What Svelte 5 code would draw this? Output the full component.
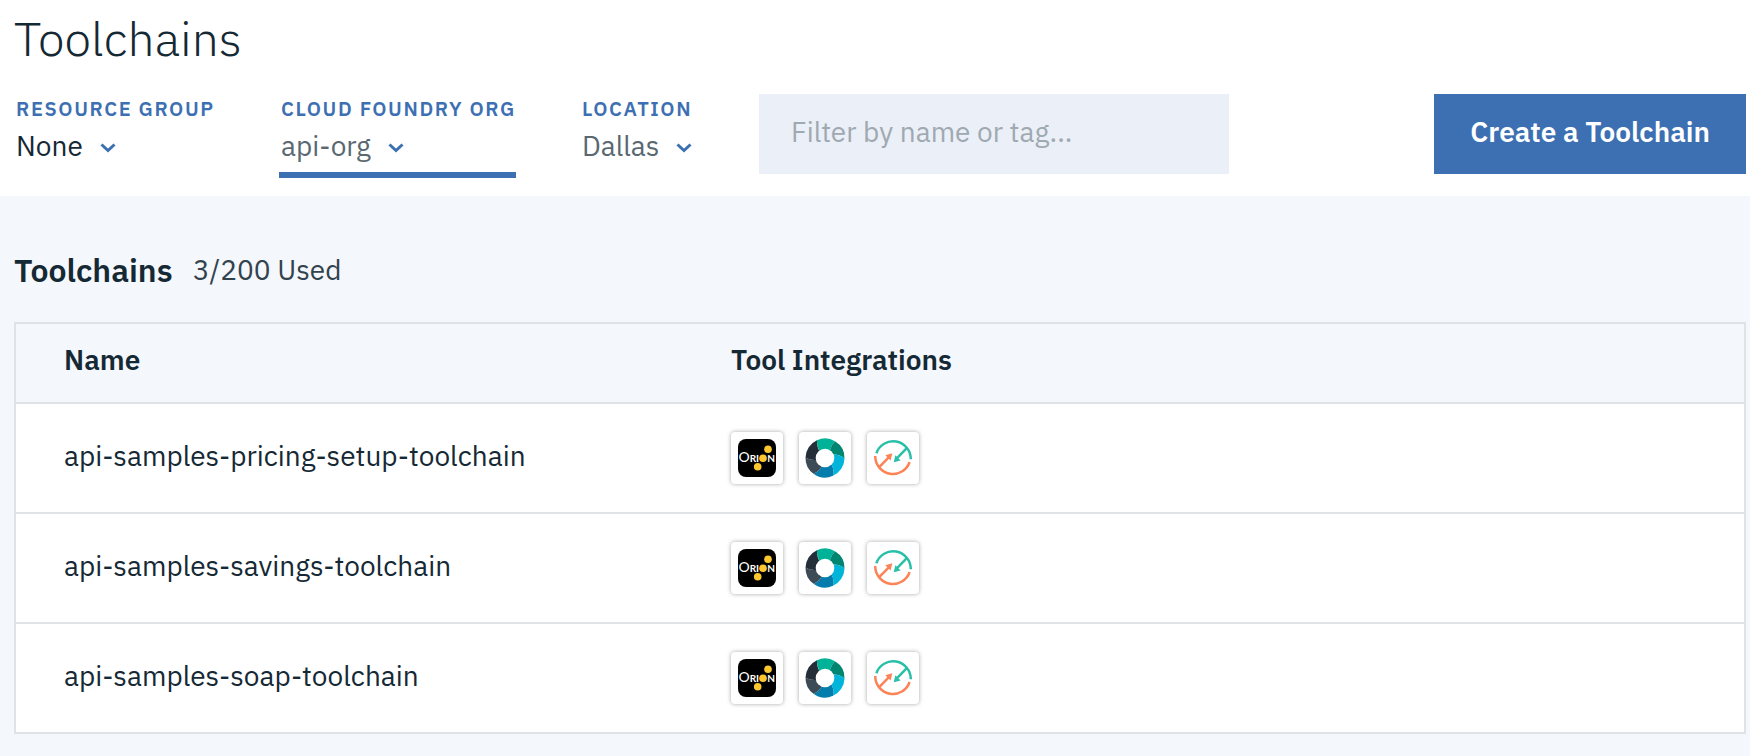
<script>
  const filters = [
    { id: 'group', label: 'Resource Group', value: 'None' },
    { id: 'org', label: 'Cloud Foundry Org', value: 'api-org' },
    { id: 'location', label: 'Location', value: 'Dallas' }
  ];

  const toolchains = [
    'api-samples-pricing-setup-toolchain',
    'api-samples-savings-toolchain',
    'api-samples-soap-toolchain'
  ];

  let query = $state('');
</script>

{#snippet orion()}
  <svg viewBox="0 0 38 38" role="img" aria-label="Orion">
    <rect width="38" height="38" rx="8" fill="#000" />
    <text class="orion-big" x="0.5" y="22.500">O</text>
    <text class="orion-small" x="11.700" y="22.500">RI</text>
    <text class="orion-small" x="29.300" y="22.500">N</text>
    <circle cx="30" cy="10.300" r="3.800" fill="#fdc82f" />
    <circle cx="25" cy="19.300" r="3.800" fill="#fdc82f" />
    <circle cx="19.700" cy="27.800" r="3.800" fill="#fdc82f" />
  </svg>
{/snippet}

{#snippet pipeline()}
  <svg class="ring" viewBox="0 0 40 40" role="img" aria-label="Delivery Pipeline">
    <path d="M12 2.200A19.500 19.500 0 0 1 30 3.200Q26 7 25 12L20 20L14.500 13Q11.500 8 12 2.200Z" fill="#00b398" />
    <path d="M30 3.200A19.500 19.500 0 0 1 39.500 20.500Q35 16.500 29 16.500L20 20L25 12Q26 7 30 3.200Z" fill="#008571" />
    <path d="M39.500 20.500A19.500 19.500 0 0 1 28 37.800Q29.500 32 26.500 26.500L20 20L29 16.500Q35 16.500 39.500 20.500Z" fill="#00b4da" />
    <path d="M28 37.800A19.500 19.500 0 0 1 8.500 35.800Q14 33.500 17 28L20 20L26.500 26.500Q29.500 32 28 37.800Z" fill="#047cac" />
    <path d="M8.500 35.800A19.500 19.500 0 0 1 .5 19.500Q5 22.500 11.500 22L20 20L17 28Q14 33.500 8.500 35.800Z" fill="#3c4b55" />
    <path d="M.5 19.500A19.500 19.500 0 0 1 12 2.200Q11.500 8 14.500 13L20 20L11.500 22Q5 22.500 .5 19.500Z" fill="#232e38" />
    <circle cx="20" cy="20" r="9.300" fill="#fff" />
  </svg>
{/snippet}

{#snippet insights()}
  <svg viewBox="0 0 40 40" role="img" aria-label="DevOps Insights" fill="none" stroke-width="2.600">
    <g stroke="#29bfa8">
      <path d="M2.500 15A18.600 18.600 0 0 1 38.700 21.400" />
      <path d="M34.500 9.500L24 20.500" />
    </g>
    <path d="M20.800 24.500L22.500 17L28 22.500Z" fill="#29bfa8" />
    <g stroke="#fc8356">
      <path d="M1.300 18A18.600 18.600 0 0 0 37.500 24.200" />
      <path d="M5.500 29.500L16 18.800" />
    </g>
    <path d="M19.200 15L17.500 22.500L12 17Z" fill="#fc8356" />
  </svg>
{/snippet}

<header>
  <h1>Toolchains</h1>
  <div class="toolbar">
    {#each filters as filter}
      <div class="filter {filter.id}">
        <label for={filter.id}>{filter.label}</label>
        <div class="picker">
          <select id={filter.id}>
            <option>{filter.value}</option>
          </select>
          <svg viewBox="0 0 16 10" aria-hidden="true"><path d="M1.500 1.500L8 7.500L14.500 1.500" /></svg>
        </div>
      </div>
    {/each}
    <input type="text" aria-label="Filter toolchains" placeholder="Filter by name or tag..." bind:value={query} />
    <button type="button">Create a Toolchain</button>
  </div>
</header>

<main>
  <div class="summary">
    <h2>Toolchains</h2>
    <span>3/200 Used</span>
  </div>
  <table>
    <thead>
      <tr><th>Name</th><th>Tool Integrations</th></tr>
    </thead>
    <tbody>
      {#each toolchains.filter((name) => name.includes(query)) as name}
        <tr>
          <td class="name">{name}</td>
          <td>
            <div class="tools">
              <span class="tile">{@render orion()}</span>
              <span class="tile">{@render pipeline()}</span>
              <span class="tile">{@render insights()}</span>
            </div>
          </td>
        </tr>
      {/each}
    </tbody>
  </table>
</main>

<style>
  :global(body) {
    background: #f4f7fc;
    color: #152935;
    font-family: "IBM Plex Sans", Roboto, sans-serif;
    font-size: 28px;
    line-height: 36px;
  }
  header {
    background: #fff;
    padding: 6px 4px 22px 14px;
  }
  h1 {
    margin: 0 0 24px;
    font-size: 48px;
    line-height: 64px;
    font-weight: 300;
  }
  .toolbar {
    display: flex;
    align-items: flex-start;
  }
  .filter {
    box-sizing: border-box;
    height: 84px;
    margin: 0 64px -4px 0;
    padding: 1px 0 0 2px;
    border-bottom: 6px solid transparent;
    white-space: nowrap;
  }
  .group { min-width: 201px; }
  .org {
    min-width: 237px;
    border-color: #3d70b2;
  }
  .location { min-width: 115px; }
  label {
    display: block;
    color: #3d70b2;
    font-size: 20px;
    line-height: 28px;
    font-weight: 600;
    letter-spacing: 0.08em;
    text-transform: uppercase;
  }
  .picker {
    display: inline-grid;
    align-items: center;
    margin-top: 5px;
  }
  .picker > * { grid-area: 1 / 1; }
  .picker svg {
    justify-self: end;
    width: 16px;
    height: 10px;
    margin-top: 4px;
    fill: none;
    stroke: #3d70b2;
    stroke-width: 3;
    pointer-events: none;
  }
  select {
    appearance: none;
    field-sizing: content;
    margin: 0;
    padding: 0 33px 0 0;
    border: 0;
    background: none;
    color: #5a6872;
    font: inherit;
  }
  .group select { color: #152935; }
  input {
    box-sizing: border-box;
    flex: 0 1 470px;
    min-width: 0;
    height: 80px;
    padding: 0 32px 6px;
    border: 0;
    background: #ebeff8;
    color: #152935;
    font: inherit;
  }
  input::placeholder {
    color: #9fa9b0;
    opacity: 1;
  }
  button {
    height: 80px;
    margin-left: auto;
    padding: 0 36px 4px;
    border: 0;
    background: #3d70b2;
    color: #fff;
    font: inherit;
    font-weight: 600;
    white-space: nowrap;
  }
  main { padding: 54px 4px 22px 14px; }
  .summary {
    display: flex;
    align-items: center;
    gap: 20px;
    margin-bottom: 32px;
  }
  h2 {
    margin: 0;
    font-size: 32px;
    line-height: 40px;
    font-weight: 600;
  }
  .summary span { color: #32434e; }
  table {
    width: 100%;
    table-layout: fixed;
    border-collapse: separate;
    border-spacing: 0;
    border: 2px solid #dfe3e6;
    border-bottom: 0;
  }
  th, td {
    box-sizing: border-box;
    padding: 0;
    border-bottom: 2px solid #dfe3e6;
    text-align: left;
  }
  th {
    height: 80px;
    padding-bottom: 6px;
    font-weight: 600;
  }
  td {
    height: 110px;
    background: #fff;
  }
  .name { padding-bottom: 4px; }
  th:first-child, td:first-child {
    width: 715px;
    padding-left: 48px;
  }
  .tools {
    display: flex;
    gap: 16px;
  }
  .tile {
    display: grid;
    place-items: center;
    width: 52px;
    height: 52px;
    border-radius: 4px;
    background: #fff;
    box-shadow: 0 0 4px rgba(0, 0, 0, 0.35);
  }
  .tile svg {
    width: 38px;
    height: 38px;
  }
  .tile .ring {
    width: 40px;
    height: 40px;
  }
  .orion-big, .orion-small {
    fill: #fff;
    font-family: Lato, sans-serif;
  }
  .orion-big {
    font-size: 14px;
    font-weight: 400;
  }
  .orion-small {
    font-size: 10px;
    font-weight: 700;
  }
</style>
